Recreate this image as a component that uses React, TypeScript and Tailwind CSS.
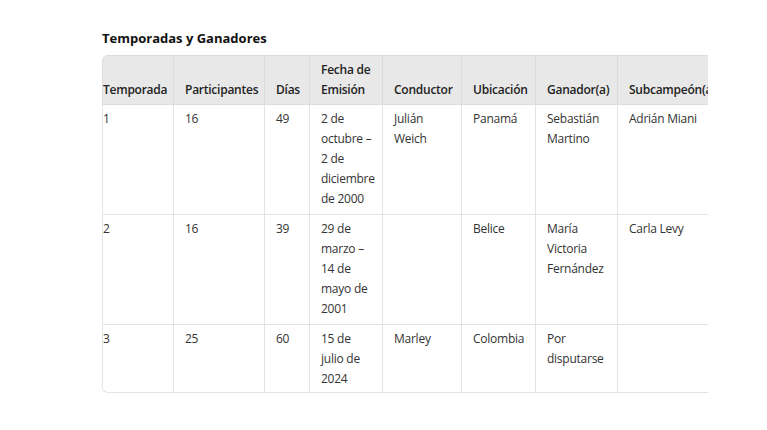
const COLS = [
  { label: ["Temporada"], w: "w-[71px]" },
  { label: ["Participantes"], w: "w-[91px]" },
  { label: ["Días"], w: "w-[45px]" },
  { label: ["Fecha de", "Emisión"], w: "w-[73px]" },
  { label: ["Conductor"], w: "w-[79px]" },
  { label: ["Ubicación"], w: "w-[74px]" },
  { label: ["Ganador(a)"], w: "w-[82px]" },
  { label: ["Subcampeón(a)"], w: "w-[110px]" },
];

const ROWS: string[][][] = [
  [["1"], ["16"], ["49"], ["2 de", "octubre –", "2 de", "diciembre", "de 2000"], ["Julián", "Weich"], ["Panamá"], ["Sebastián", "Martino"], ["Adrián Miani"]],
  [["2"], ["16"], ["39"], ["29 de", "marzo –", "14 de", "mayo de", "2001"], [], ["Belice"], ["María", "Victoria", "Fernández"], ["Carla Levy"]],
  [["3"], ["25"], ["60"], ["15 de", "julio de", "2024"], ["Marley"], ["Colombia"], ["Por", "disputarse"], []],
];

function Lines({ lines }: { lines: string[] }) {
  return (
    <>
      {lines.map((l, i) => (
        <div key={i} className="whitespace-nowrap">{l}</div>
      ))}
    </>
  );
}

export default function App() {
  return (
    <div className="w-[767px] h-[430px] bg-white pl-[102px] pt-[29px]" style={{ fontFamily: '"Open Sans", "Noto Sans", sans-serif' }}>
      <h2 className="text-[13px] font-bold text-[#111] leading-[18px]">Temporadas y Ganadores</h2>
      <div className="mt-[8px] w-[606px] overflow-hidden">
        <table className="table-fixed border-separate border-spacing-0 text-[12px] leading-[20px] tracking-[-0.25px] w-[625px]">
          <thead>
            <tr>
              {COLS.map((c, i) => (
                <th key={i}
                  className={`${c.w} bg-[#e8e8e8] text-left align-bottom font-semibold text-[#222] py-[4px] border-t border-b border-l border-[#dcdcdc] ${i === 0 ? "pl-0 pr-[8px] rounded-tl-[6px]" : "pl-[11px] pr-[8px]"}`}>
                  <Lines lines={c.label} />
                </th>
              ))}
            </tr>
          </thead>
          <tbody>
            {ROWS.map((row, r) => {
              const last = r === ROWS.length - 1;
              return (
                <tr key={r}>
                  {row.map((cell, i) => (
                    <td key={i}
                      className={`align-top text-[#333] pt-[4px] border-l border-b border-[#e3e3e3] ${last ? "pb-[3px]" : "pb-[5px]"} ${i === 0 ? "pl-0 pr-[8px]" : "pl-[11px] pr-[8px]"} ${last && i === 0 ? "rounded-bl-[6px]" : ""}`}>
                      <Lines lines={cell} />
                    </td>
                  ))}
                </tr>
              );
            })}
          </tbody>
        </table>
      </div>
    </div>
  );
}
